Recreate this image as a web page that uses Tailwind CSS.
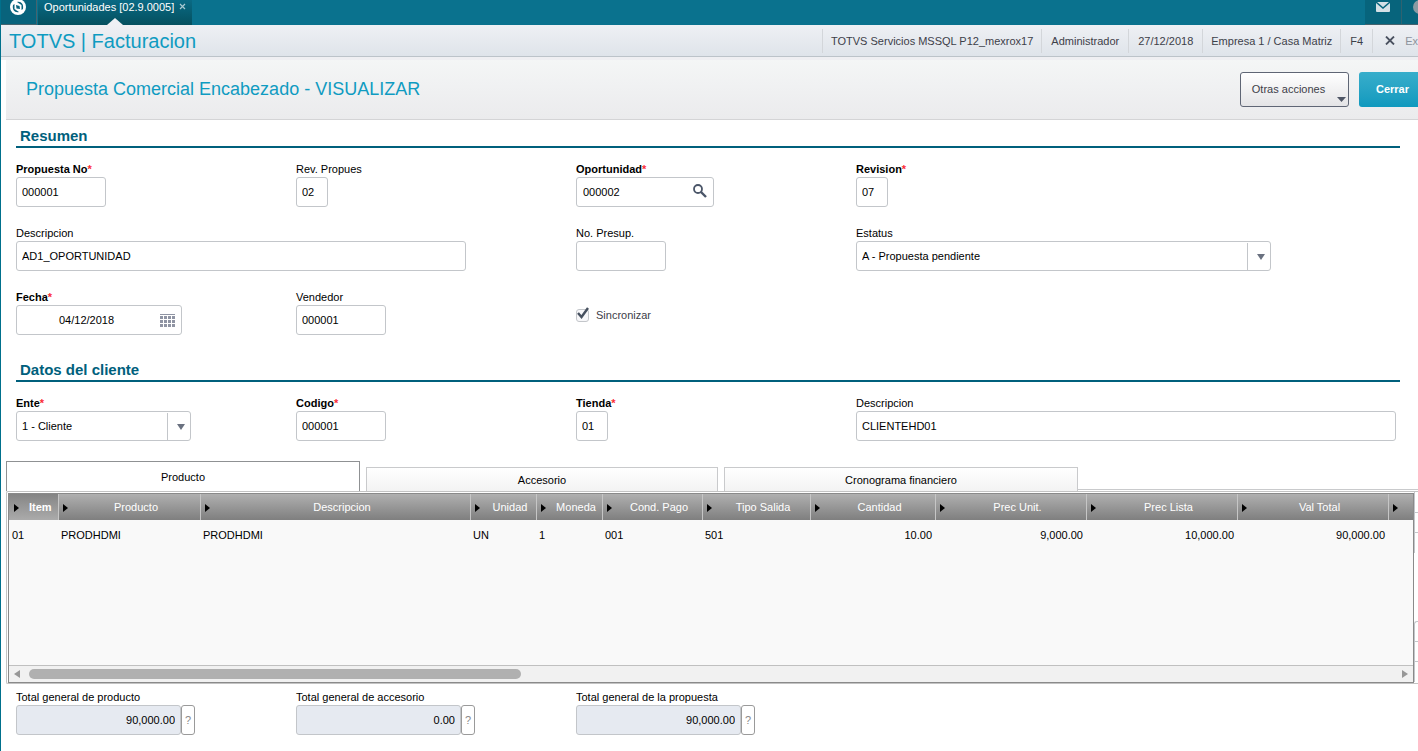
<!DOCTYPE html>
<html lang="es">
<head>
  <meta charset="UTF-8">
  <meta name="viewport" content="width=device-width, initial-scale=1.0">
  <title>TOTVS | Facturacion</title>
  <script src="https://cdn.jsdelivr.net/npm/@tailwindcss/browser@4"></script>
</head>
<body class="bg-white min-h-screen overflow-hidden border-l border-[#00708c] text-[11px] text-black font-['Liberation_Sans',Arial,sans-serif]">

  <!-- Top bar -->
  <header class="flex h-[25px] -ml-px bg-[#0a728e] text-white">
    <a href="#" aria-label="Inicio" class="w-[37px] flex justify-center bg-[#08637c] border-r border-b border-[#45636e]">
      <svg class="w-4 h-4" viewBox="0 0 16 16">
        <circle cx="8" cy="7" r="8" fill="white"/>
        <path d="M7 2 C11 1 14 4 13 9 L11.500 10 L11.500 5 Z M9 12 C5 13 2 10 3 5 L4.500 4 L4.500 9 Z" fill="#08637c"/>
        <path d="M6 5 L9.500 6 L10 9 L6.500 8.500 Z" fill="#08637c"/>
      </svg>
    </a>
    <div class="relative w-[154px] ml-px flex items-start pl-[6px] bg-linear-to-b from-[#0a6a84] to-[#05505f]">
      <span class="leading-[14px]">Oportunidades [02.9.0005]</span>
      <button aria-label="Cerrar pestaña" class="ml-[5px] mt-[3px]">
        <svg class="w-[7px] h-[7px]" viewBox="0 0 7 7" stroke="#a9c9d2" stroke-width="1.2"><path d="M1 1 L6 6 M6 1 L1 6"/></svg>
      </button>
      <svg class="absolute bottom-0 left-[69px] w-[16px] h-[7px]" viewBox="0 0 16 7"><path d="M0 7 L8 0 L16 7 Z" fill="#eef0f4"/></svg>
    </div>
    <div class="ml-auto flex bg-[#07647c] border-b border-[#45636e]">
      <button aria-label="Mensajes" class="w-[37px] flex justify-center border-r border-[#2f6270]">
        <svg class="w-[14px] h-[13px]" viewBox="0 0 14 13"><rect x="0" y="2" width="14" height="10" rx="1" fill="#d5e0e6"/><path d="M0 2 L7 8 L14 2" fill="none" stroke="#07647c" stroke-width="1.5"/></svg>
      </button>
      <button aria-label="Ayuda" class="w-[20px] -mr-1 pl-[11px]">
        <svg class="w-[14px] h-[14px] -mt-[10px] max-w-none" viewBox="0 0 14 14"><circle cx="7" cy="7" r="7" fill="#8b9ba3"/></svg>
      </button>
    </div>
  </header>

  <!-- Module bar -->
  <div class="flex h-8 items-center bg-linear-to-b from-[#eef0f4] to-[#dfe4ea] border-b border-[#bcc3c9] whitespace-nowrap text-[#3d4049]">
    <h1 class="pl-2 text-[20px] leading-8 text-[#0f9bc1]">TOTVS | Facturacion</h1>
    <ul class="ml-auto flex leading-6">
      <li class="px-2 border-l border-[#d3d6da]">TOTVS Servicios MSSQL P12_mexrox17</li>
      <li class="px-[9px] border-l border-[#d3d6da]">Administrador</li>
      <li class="px-[9px] border-l border-[#d3d6da]">27/12/2018</li>
      <li class="px-2 border-l border-[#d3d6da]">Empresa 1 / Casa Matriz</li>
      <li class="px-[9px] border-l border-[#d3d6da]">F4</li>
      <li class="pl-3 border-l border-[#d3d6da]">
        <a href="#" class="flex items-center gap-[10px] text-[#8d939c]">
          <svg class="w-[10px] h-[9px]" viewBox="0 0 10 9" stroke="#4a5160" stroke-width="1.8"><path d="M1 0.500 L9 8.500 M9 0.500 L1 8.500"/></svg>
          Ex
        </a>
      </li>
    </ul>
  </div>

  <!-- Page title -->
  <div class="h-[3px] bg-[#efeff2]"></div>
  <div class="ml-[5px] h-[60px] flex items-center pl-5 bg-linear-to-b from-[#f4f6f6] to-[#ebebed] border-b border-[#d4d4d6]">
    <h2 class="text-[18px] text-[#0f9bc1] whitespace-nowrap">Propuesta Comercial Encabezado - VISUALIZAR</h2>
    <div class="ml-auto -mr-2 flex gap-[10px]">
      <button class="relative w-[109px] h-[35px] pr-3 rounded-[3px] border border-[#5f6675] bg-linear-to-b from-white to-[#e4e4e6] text-[#3d4049]">
        Otras acciones
        <svg class="absolute right-[2px] bottom-[4px] w-[9px] h-[5px]" viewBox="0 0 9 5"><path d="M0 0 H9 L4.500 5 Z" fill="#4f5665"/></svg>
      </button>
      <button class="w-[67px] h-[35px] rounded-[3px] bg-linear-to-b from-[#37aecb] to-[#0e99be] font-bold text-white">Cerrar</button>
    </div>
  </div>

  <main>
    <form class="pl-[15px] pr-[18px] pt-2">
      <h3 class="h-5 pl-1 border-b-2 border-[#00607c] text-[15px] leading-4 font-bold text-[#00607c]">Resumen</h3>
      <div class="grid grid-cols-[280px_280px_280px_1fr] gap-y-[19px] pt-[14px] pb-[22px]">
        <div>
          <label for="propuesta" class="block leading-[15px] font-bold">Propuesta No<span class="text-red-500">*</span></label>
          <input id="propuesta" value="000001" class="block w-[90px] h-[30px] px-[5px] border border-[#c3c6ca] rounded-[3px]">
        </div>
        <div>
          <label for="rev" class="block leading-[15px]">Rev. Propues</label>
          <input id="rev" value="02" class="block w-8 h-[30px] px-[5px] border border-[#c3c6ca] rounded-[3px]">
        </div>
        <div>
          <label for="oportunidad" class="block leading-[15px] font-bold">Oportunidad<span class="text-red-500">*</span></label>
          <div class="relative w-[138px]">
            <input id="oportunidad" value="000002" class="block w-full h-[30px] px-[6px] border border-[#c3c6ca] rounded-[3px]">
            <button type="button" aria-label="Buscar" class="absolute right-[7px] top-[7px]">
              <svg class="w-[14px] h-[14px]" viewBox="0 0 14 14" fill="none" stroke="#4a5568"><circle cx="5" cy="5" r="4" stroke-width="1.8"/><path d="M8 8 L13 13" stroke-width="2.4"/></svg>
            </button>
          </div>
        </div>
        <div>
          <label for="revision" class="block leading-[15px] font-bold">Revision<span class="text-red-500">*</span></label>
          <input id="revision" value="07" class="block w-8 h-[30px] px-[5px] border border-[#c3c6ca] rounded-[3px]">
        </div>

        <div class="col-span-2">
          <label for="descripcion" class="block leading-[15px]">Descripcion</label>
          <input id="descripcion" value="AD1_OPORTUNIDAD" class="block w-[450px] h-[30px] px-[5px] border border-[#c3c6ca] rounded-[3px]">
        </div>
        <div>
          <label for="presup" class="block leading-[15px]">No. Presup.</label>
          <input id="presup" class="block w-[90px] h-[30px] px-[5px] border border-[#c3c6ca] rounded-[3px]">
        </div>
        <div>
          <label for="estatus" class="block leading-[15px]">Estatus</label>
          <div class="relative w-[415px]">
            <select id="estatus" class="block appearance-none w-full h-[30px] px-[5px] border border-[#c3c6ca] rounded-[3px] bg-white">
              <option>A - Propuesta pendiente</option>
            </select>
            <span class="absolute right-px top-[2px] h-[27px] w-[23px] pl-1 border-l border-[#c3c6ca] flex items-center justify-center pointer-events-none">
              <svg class="w-2 h-[6px]" viewBox="0 0 8 6"><path d="M0 0 H8 L4 6 Z" fill="#6a7180"/></svg>
            </span>
          </div>
        </div>

        <div>
          <label for="fecha" class="block leading-[15px] font-bold">Fecha<span class="text-red-500">*</span></label>
          <div class="relative w-[166px]">
            <input id="fecha" value="04/12/2018" class="block w-full h-[30px] pl-[5px] pr-[30px] text-center border border-[#c3c6ca] rounded-[3px]">
            <button type="button" aria-label="Calendario" class="absolute right-[7px] top-[9px]">
              <svg class="w-[15px] h-[13px]" viewBox="0 0 15 13" stroke="#8f94a3" fill="none"><path d="M0 0.5 H15" stroke-width="1"/><path d="M0 3.5 H15 M0 7.5 H15 M0 11.5 H15" stroke-width="3" stroke-dasharray="3 1"/></svg>
            </button>
          </div>
        </div>
        <div>
          <label for="vendedor" class="block leading-[15px]">Vendedor</label>
          <input id="vendedor" value="000001" class="block w-[90px] h-[30px] px-[5px] border border-[#c3c6ca] rounded-[3px]">
        </div>
        <div class="relative flex items-center gap-[7px] h-[50px]">
          <input id="sincronizar" type="checkbox" checked class="appearance-none w-[13px] h-[13px] border border-[#c3c6ca] rounded-[3px] bg-[#f7f7f9]">
          <svg class="absolute left-px top-[17px] w-3 h-3 pointer-events-none" viewBox="0 0 12 12" fill="none" stroke="#46505f" stroke-width="2.4"><path d="M1 6 L4.500 10 L11 1"/></svg>
          <label for="sincronizar" class="text-[#3d4049]">Sincronizar</label>
        </div>
      </div>

      <h3 class="h-5 pl-1 border-b-2 border-[#00607c] text-[15px] leading-4 font-bold text-[#00607c]">Datos del cliente</h3>
      <div class="grid grid-cols-[280px_280px_280px_1fr] pt-[14px] pb-5">
        <div>
          <label for="ente" class="block leading-[15px] font-bold">Ente<span class="text-red-500">*</span></label>
          <div class="relative w-[175px]">
            <select id="ente" class="block appearance-none w-full h-[30px] px-[5px] border border-[#c3c6ca] rounded-[3px] bg-white">
              <option>1 - Cliente</option>
            </select>
            <span class="absolute right-px top-[2px] h-[27px] w-[23px] pl-1 border-l border-[#c3c6ca] flex items-center justify-center pointer-events-none">
              <svg class="w-2 h-[6px]" viewBox="0 0 8 6"><path d="M0 0 H8 L4 6 Z" fill="#6a7180"/></svg>
            </span>
          </div>
        </div>
        <div>
          <label for="codigo" class="block leading-[15px] font-bold">Codigo<span class="text-red-500">*</span></label>
          <input id="codigo" value="000001" class="block w-[90px] h-[30px] px-[5px] border border-[#c3c6ca] rounded-[3px]">
        </div>
        <div>
          <label for="tienda" class="block leading-[15px] font-bold">Tienda<span class="text-red-500">*</span></label>
          <input id="tienda" value="01" class="block w-8 h-[30px] px-[5px] border border-[#c3c6ca] rounded-[3px]">
        </div>
        <div class="pr-1">
          <label for="cliente" class="block leading-[15px]">Descripcion</label>
          <input id="cliente" value="CLIENTEHD01" class="block w-full h-[30px] px-[5px] border border-[#c3c6ca] rounded-[3px]">
        </div>
      </div>
    </form>

    <!-- Tabs -->
    <div class="flex items-end gap-[6px] h-[30px] pl-[5px]">
      <button class="w-[354px] h-[30px] pt-px border border-b-0 border-[#8f9193] bg-white">Producto</button>
      <button class="w-[352px] h-6 pt-px border border-b-0 border-[#c9cacc] bg-linear-to-b from-white to-[#f3f3f3]">Accesorio</button>
      <button class="w-[354px] h-6 pt-px border border-b-0 border-[#c9cacc] bg-linear-to-b from-white to-[#f3f3f3]">Cronograma financiero</button>
      <div class="flex-1 -ml-[6px] mb-px border-b border-[#c9cacc]"></div>
    </div>

    <!-- Items grid -->
    <div class="flex ml-[5px] pl-px border-y border-l border-[#c3c3c3] rounded-l-[2px]">
      <div class="flex-1 flex flex-col mt-px border border-[#8a8a8a] bg-[#f9f9f9]">
        <table class="w-full table-fixed border-collapse">
          <colgroup>
            <col class="w-[49px]"><col class="w-[142px]"><col><col class="w-[66px]"><col class="w-[66px]"><col class="w-[100px]">
            <col class="w-[108px]"><col class="w-[125px]"><col class="w-[151px]"><col class="w-[151px]"><col class="w-[151px]"><col class="w-[25px]">
          </colgroup>
          <thead class="text-white">
            <tr class="h-[26px] bg-linear-to-b from-[#b0b0b0] to-[#7f7f7f]">
              <th class="relative pl-[14px] bg-linear-to-b from-[#858585] to-[#ababab] font-bold"><svg class="absolute left-[5px] top-[10px] w-[5px] h-2" viewBox="0 0 5 8"><path d="M0 0 L5 4 L0 8 Z"/></svg>Item</th>
              <th class="relative pl-[14px] border-l border-[#c6c6c6] font-normal"><svg class="absolute left-1 top-[10px] w-[5px] h-2" viewBox="0 0 5 8"><path d="M0 0 L5 4 L0 8 Z"/></svg>Producto</th>
              <th class="relative pl-[14px] border-l border-[#c6c6c6] font-normal"><svg class="absolute left-1 top-[10px] w-[5px] h-2" viewBox="0 0 5 8"><path d="M0 0 L5 4 L0 8 Z"/></svg>Descripcion</th>
              <th class="relative pl-[14px] border-l border-[#c6c6c6] font-normal"><svg class="absolute left-1 top-[10px] w-[5px] h-2" viewBox="0 0 5 8"><path d="M0 0 L5 4 L0 8 Z"/></svg>Unidad</th>
              <th class="relative pl-[14px] border-l border-[#c6c6c6] font-normal"><svg class="absolute left-1 top-[10px] w-[5px] h-2" viewBox="0 0 5 8"><path d="M0 0 L5 4 L0 8 Z"/></svg>Moneda</th>
              <th class="relative pl-[14px] border-l border-[#c6c6c6] font-normal"><svg class="absolute left-1 top-[10px] w-[5px] h-2" viewBox="0 0 5 8"><path d="M0 0 L5 4 L0 8 Z"/></svg>Cond. Pago</th>
              <th class="relative pl-[14px] border-l border-[#c6c6c6] font-normal"><svg class="absolute left-1 top-[10px] w-[5px] h-2" viewBox="0 0 5 8"><path d="M0 0 L5 4 L0 8 Z"/></svg>Tipo Salida</th>
              <th class="relative pl-[14px] border-l border-[#c6c6c6] font-normal"><svg class="absolute left-1 top-[10px] w-[5px] h-2" viewBox="0 0 5 8"><path d="M0 0 L5 4 L0 8 Z"/></svg>Cantidad</th>
              <th class="relative pl-[14px] border-l border-[#c6c6c6] font-normal"><svg class="absolute left-1 top-[10px] w-[5px] h-2" viewBox="0 0 5 8"><path d="M0 0 L5 4 L0 8 Z"/></svg>Prec Unit.</th>
              <th class="relative pl-[14px] border-l border-[#c6c6c6] font-normal"><svg class="absolute left-1 top-[10px] w-[5px] h-2" viewBox="0 0 5 8"><path d="M0 0 L5 4 L0 8 Z"/></svg>Prec Lista</th>
              <th class="relative pl-[14px] border-l border-[#c6c6c6] font-normal"><svg class="absolute left-1 top-[10px] w-[5px] h-2" viewBox="0 0 5 8"><path d="M0 0 L5 4 L0 8 Z"/></svg>Val Total</th>
              <th class="relative border-l border-[#c6c6c6]"><svg class="absolute left-1 top-[10px] w-[5px] h-2" viewBox="0 0 5 8"><path d="M0 0 L5 4 L0 8 Z"/></svg></th>
            </tr>
          </thead>
          <tbody>
            <tr class="h-[30px]">
              <td class="px-[3px]">01</td>
              <td class="px-[3px]">PRODHDMI</td>
              <td class="px-[3px]">PRODHDMI</td>
              <td class="px-[3px]">UN</td>
              <td class="px-[3px]">1</td>
              <td class="px-[3px]">001</td>
              <td class="px-[3px]">501</td>
              <td class="px-[3px] text-right">10.00</td>
              <td class="px-[3px] text-right">9,000.00</td>
              <td class="px-[3px] text-right">10,000.00</td>
              <td class="px-[3px] text-right">90,000.00</td>
              <td></td>
            </tr>
          </tbody>
        </table>
        <div class="mt-[115px] h-[17px] flex items-center px-[5px] bg-[#f1f1f1] border-t border-[#c0c0c0]">
          <button aria-label="Izquierda"><svg class="w-[6px] h-2" viewBox="0 0 6 8"><path d="M6 0 L0 4 L6 8 Z" fill="#979797"/></svg></button>
          <div class="flex-1 mx-[9px]"><div class="w-[492px] h-[10px] rounded-full bg-[#b0b0b0]"></div></div>
          <button aria-label="Derecha"><svg class="w-[6px] h-2" viewBox="0 0 6 8"><path d="M0 0 L6 4 L0 8 Z" fill="#979797"/></svg></button>
        </div>
      </div>
      <!-- Edge of the side toolbar -->
      <div class="w-1 flex flex-col justify-between pb-px">
        <div class="h-[61px] border-l border-[#c3c6ca] divide-y divide-[#c3c6ca]">
          <div class="h-[21px]"></div><div class="h-5"></div><div class="h-5"></div>
        </div>
        <div class="h-[61px] border-l border-t border-[#c3c6ca] rounded-tl-[3px] divide-y divide-[#c3c6ca]">
          <div class="h-5"></div><div class="h-5"></div><div class="h-5"></div>
        </div>
      </div>
    </div>

    <!-- Totals -->
    <div class="grid grid-cols-[280px_280px_1fr] pl-[15px] pt-[6px]">
      <div>
        <label for="total-producto" class="block leading-[15px]">Total general de producto</label>
        <div class="flex">
          <input id="total-producto" value="90,000.00" readonly class="w-[165px] h-[30px] px-[5px] text-right bg-[#e6eaf1] border border-[#c3c6ca] rounded-[3px]">
          <button aria-label="Ayuda" class="w-[14px] h-[30px] border border-[#9a9a9a] rounded-[3px] text-[#8a8a8a]">?</button>
        </div>
      </div>
      <div>
        <label for="total-accesorio" class="block leading-[15px]">Total general de accesorio</label>
        <div class="flex">
          <input id="total-accesorio" value="0.00" readonly class="w-[165px] h-[30px] px-[5px] text-right bg-[#e6eaf1] border border-[#c3c6ca] rounded-[3px]">
          <button aria-label="Ayuda" class="w-[14px] h-[30px] border border-[#9a9a9a] rounded-[3px] text-[#8a8a8a]">?</button>
        </div>
      </div>
      <div>
        <label for="total-propuesta" class="block leading-[15px]">Total general de la propuesta</label>
        <div class="flex">
          <input id="total-propuesta" value="90,000.00" readonly class="w-[165px] h-[30px] px-[5px] text-right bg-[#e6eaf1] border border-[#c3c6ca] rounded-[3px]">
          <button aria-label="Ayuda" class="w-[14px] h-[30px] border border-[#9a9a9a] rounded-[3px] text-[#8a8a8a]">?</button>
        </div>
      </div>
    </div>
  </main>
</body>
</html>
